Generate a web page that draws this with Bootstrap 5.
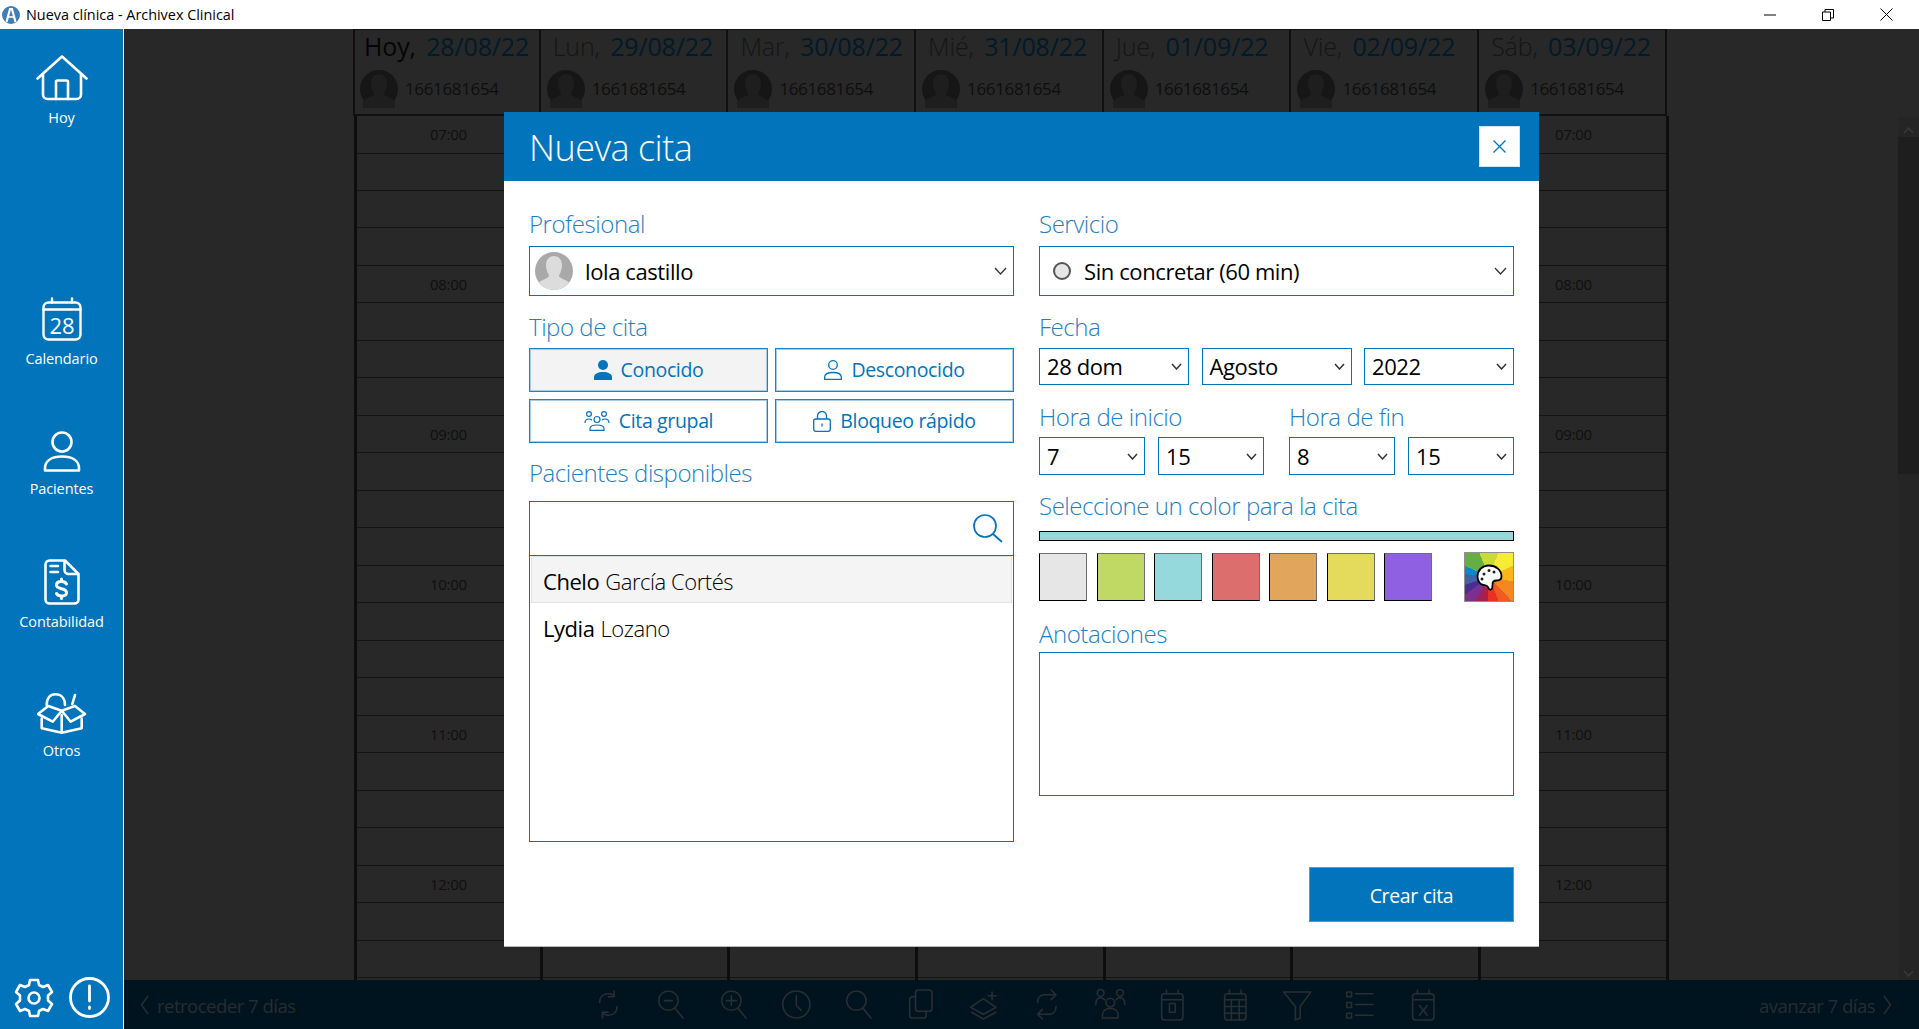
<!DOCTYPE html>
<html lang="es">
<head>
    <meta charset="UTF-8">
    <meta name="viewport" content="width=device-width, initial-scale=1.0">
    <title>Nueva clínica - Archivex Clinical</title>
    <link href="https://cdn.jsdelivr.net/npm/bootstrap@5.3.0/dist/css/bootstrap.min.css" rel="stylesheet">
    <style>
        html, body {
            height: 100%;
            overflow: hidden;
        }
        body {
            font-family: "Open Sans", "Noto Sans", sans-serif;
            background: #282828;
            color: #000;
        }
        .app-shell {
            height: 1029px;
            position: relative;
        }
        .title-bar {
            height: 29px;
            background: #fff;
            font-size: 14.4px;
            padding-left: 2px;
        }
        .title-bar .title-text {
            margin-left: 6px;
        }
        .win-btns {
            gap: 46px;
            padding-right: 26px;
        }
        .app-body {
            height: 1000px;
        }
        .side-bar {
            width: 124px;
            background: #0274bc;
            border-right: 1px solid #fff;
            color: #fff;
            font-size: 14.5px;
            letter-spacing: -.1px;
        }
        .side-item {
            text-align: center;
            line-height: 18px;
        }
        .side-item svg {
            display: block;
            margin: 0 auto 8px;
        }
        .side-hoy { padding-top: 26px; height: 268px; }
        .side-cal { height: 134px; }
        .side-cal svg { margin-bottom: 9px; }
        .side-pac { height: 128px; }
        .side-con { height: 134px; }
        .side-bottom {
            padding: 0 13px 11px 14px;
            gap: 15px;
        }
        .main-zone {
            min-width: 0;
        }
        .cal-zone {
            height: 951px;
            padding-left: 229px;
            position: relative;
        }
        .cal-day {
            width: 187.7px;
            flex: none;
        }
        .cal-head {
            height: 87px;
            border-top: 1px solid #101010;
            border-right: 2px solid #101010;
            border-bottom: 2px solid #101010;
            color: #151515;
        }
        .cal-day:first-child .cal-head {
            border-left: 2px solid #101010;
            color: #050505;
        }
        .cal-date {
            font-size: 25px;
            font-weight: 300;
            line-height: 36px;
            white-space: nowrap;
            letter-spacing: -.15px;
            margin-top: -2px;
            padding-left: 12px;
        }
        .cal-date b {
            color: #011a2a;
            font-weight: 500;
            margin-left: 4px;
        }
        .cal-day:first-child .cal-date {
            font-weight: 400;
            padding-left: 9px;
        }
        .cal-day:first-child .cal-date b {
            font-weight: 400;
        }
        .cal-user {
            font-size: 17px;
            color: #0e0e0e;
            gap: 7px;
            letter-spacing: -.35px;
            margin-top: 6px;
            padding-left: 6px;
        }
        .cal-day:first-child .cal-user {
            padding-left: 5px;
        }
        .cal-grid {
            height: 864px;
            margin-left: 2px;
            margin-right: -2px;
            border-right: 3px solid #0d0d0d;
            background-image: repeating-linear-gradient(to bottom, transparent 0, transparent 36.5px, #141414 36.5px, #141414 37.5px);
            color: #0f0f0f;
            font-size: 15px;
            letter-spacing: -.3px;
        }
        .cal-day:first-child .cal-grid {
            margin-left: 1px;
            border-left: 3px solid #0d0d0d;
        }
        .hour-cell {
            height: 150px;
            padding-top: 7px;
            text-align: center;
            line-height: 22px;
        }
        .scroll-col {
            position: absolute;
            right: 0;
            top: 88px;
            bottom: 0;
            width: 21px;
            background: #252525;
        }
        .scroll-col .thumb {
            height: 337px;
            background: #1e1e1e;
        }
        .scroll-col .arrow {
            height: 20px;
            text-align: center;
        }
        .tool-bar {
            height: 49px;
            background: #001420;
            color: #282c2e;
            font-size: 18.5px;
            padding: 0 27px 0 16px;
        }
        .tool-side {
            width: 260px;
            gap: 8px;
            white-space: nowrap;
            letter-spacing: -.5px;
        }
        .tool-side span {
            padding-top: 3px;
        }
        .tool-icons svg {
            display: block;
            width: 62.6px;
            height: 32px;
        }
        .modal-box {
            position: absolute;
            left: 504px;
            top: 112px;
            width: 1035px;
            height: 835px;
            background: #fff;
            border-bottom: 1px solid #b9b9b9;
        }
        .modal-top {
            height: 69px;
            background: #0274bc;
            color: #fff;
            padding: 0 19px 0 25px;
        }
        .modal-top h1 {
            font-size: 36px;
            font-weight: 300;
            margin: 0;
            padding-top: 2px;
            letter-spacing: -.5px;
        }
        .close-btn {
            width: 41px;
            height: 41px;
            background: #fff;
            border: 1px solid #cfe3f1;
            border-radius: 0;
            padding: 0;
        }
        .modal-cols {
            padding: 0 25px 24px;
            gap: 25px;
            height: 765px;
        }
        .col-left {
            width: 485px;
            flex: none;
        }
        .col-right {
            width: 475px;
            flex: none;
        }
        .field-label {
            display: block;
            color: #1d7fc4;
            font-size: 24px;
            font-weight: 300;
            line-height: 32px;
            letter-spacing: -.45px;
            margin: 0;
        }
        .sp-27 { margin-top: 27px; }
        .sp-16 { margin-top: 16px; }
        .sp-15 { margin-top: 15px; }
        .sp-14 { margin-top: 14px; }
        .sp-12 { margin-top: 12px; }
        .sp-9 { margin-top: 9px; }
        .sp-7 { margin-top: 7px; }
        .sp-6 { margin-top: 6px; }
        .sp-5 { margin-top: 5px; }
        .sp-4 { margin-top: 4px; }
        .sp-2 { margin-top: 2px; }
        .box-field {
            border: 1px solid #0274bc;
            background: #fff;
            color: #000;
            font-size: 22px;
            letter-spacing: -.4px;
        }
        .big-select {
            height: 50px;
            padding: 0 6px 0 5px;
        }
        .small-select {
            height: 37px;
            padding: 0 6px 0 7px;
            flex: 1 1 0;
            min-width: 0;
        }
        .hour-sel {
            height: 38px;
        }
        .type-btn {
            flex: 1 1 0;
            height: 44px;
            border: 1px solid #1f82c4;
            box-shadow: inset 0 0 0 1px #a5cde9;
            border-radius: 0;
            background: #fff;
            color: #0274bc;
            font-size: 19.5px;
            letter-spacing: -.35px;
            gap: 9px;
            padding: 0;
        }
        .type-btn.is-on {
            background: #f3f3f3;
        }
        .patient-box {
            border: 1px solid #0274bc;
            height: 341px;
        }
        .search-row {
            height: 54px;
            border-bottom: 1px solid #0274bc;
            padding-right: 10px;
        }
        .patient-item {
            height: 47px;
            padding: 3px 0 0 11px;
            font-size: 22px;
            font-weight: 300;
            letter-spacing: -.45px;
            margin: 0 1px;
            border: 1px solid transparent;
        }
        .patient-item b {
            font-weight: 400;
            margin-right: 6px;
        }
        .patient-item.is-on {
            background: #f4f4f4;
            border-color: #e2e2e2;
        }
        .radio-dot {
            width: 18px;
            height: 18px;
            background: #e6e6e6;
            border: 2px solid #555;
            margin-left: 8px;
            margin-right: 13px;
        }
        .color-bar {
            height: 10px;
            background: #96d9dc;
            border: 1px solid #000;
        }
        .swatch-row {
            gap: 9.5px;
        }
        .swatch {
            width: 48px;
            height: 48px;
            border: 1px solid #000;
            border-top: 1px solid #6e6e6e;
            border-right: 1px solid #6e6e6e;
            flex: none;
        }
        .swatch-1 { background: #e6e6e6; }
        .swatch-2 { background: #bfd964; }
        .swatch-3 { background: #96d9dc; }
        .swatch-4 { background: #dc6e6e; }
        .swatch-5 { background: #e2a55c; }
        .swatch-6 { background: #e4da5c; }
        .swatch-7 { background: #8f60e2; }
        .palette-btn {
            width: 50px;
            height: 50px;
            margin-left: auto;
            margin-top: -1px;
            border: 1px solid #8f8f8f;
            background: conic-gradient(from -22deg, #c8db36 0 12%, #f6ec36 12% 24%, #f8b61a 24% 34%, #f4871f 34% 44%, #f15a22 44% 50%, #e92f26 50% 57%, #a71f4f 57% 64%, #7b2f90 64% 71%, #4b2d91 71% 76%, #4262a8 76% 83%, #0e88cc 83% 88%, #66ae44 88% 100%);
        }
        .notes-box {
            height: 144px;
        }
        .create-btn {
            width: 205px;
            height: 55px;
            background: #0274bc;
            color: #fff;
            border: 1px solid #4a9fd8;
            border-radius: 0;
            font-size: 19.5px;
            letter-spacing: -.35px;
            padding: 2px 0 0;
        }
        .gap-row { gap: 7px; }
        .gap-date { gap: 12.5px; }
        .gap-hour { gap: 13px; }
        .hour-group { width: 225px; flex: none; }
    </style>
</head>
<body>
<div class="app-shell">
    <div class="title-bar d-flex align-items-center">
        <svg width="18" height="18" viewBox="0 0 18 18"><circle cx="9" cy="9" r="9" fill="#3f7cb8"/><path d="M4.5 16 8 3h2l3.5 13" fill="none" stroke="#fff" stroke-width="2.2"/><path d="M6 11h6" stroke="#fff" stroke-width="1.6"/></svg>
        <span class="title-text">Nueva clínica - Archivex Clinical</span>
        <div class="win-btns d-flex align-items-center ms-auto">
            <svg width="12" height="12" viewBox="0 0 12 12"><path d="M0 6h12" stroke="#000" fill="none"/></svg>
            <svg width="12" height="12" viewBox="0 0 12 12"><path d="M.5 3h8v8.5h-8zM3 3V.5h8.5V9H8.5" stroke="#000" fill="none"/></svg>
            <svg width="13" height="13" viewBox="0 0 13 13"><path d="M.5.5l12 12M12.5.5l-12 12" stroke="#000" fill="none"/></svg>
        </div>
    </div>

    <div class="app-body d-flex">
        <div class="side-bar d-flex flex-column flex-shrink-0">
            <div class="side-item side-hoy">
                <svg width="52" height="46" viewBox="0 0 52 46" fill="none" stroke="#fff" stroke-width="2.6" stroke-linejoin="round" stroke-linecap="round"><path d="M1.5 23.5 26 1.5l24.5 22"/><path d="M7 19v20.5a4.500 4.500 0 0 0 4.500 4.500h29a4.500 4.500 0 0 0 4.500-4.500V19"/><path d="M20 44V27a1.500 1.500 0 0 1 1.500-1.500h9A1.500 1.500 0 0 1 32 27v17"/></svg>
                Hoy
            </div>
            <div class="side-item side-cal">
                <svg width="40" height="44" viewBox="0 0 40 44" fill="none" stroke="#fff" stroke-width="2.4" stroke-linecap="round"><rect x="1.5" y="5.5" width="37" height="37" rx="5"/><path d="M1.5 12.5h37M10 1.5v4M30 1.5v4"/><text x="20" y="37" text-anchor="middle" fill="#fff" stroke="none" font-size="22" font-family="Open Sans">28</text></svg>
                Calendario
            </div>
            <div class="side-item side-pac">
                <svg width="38" height="41" viewBox="0 0 38 41" fill="none" stroke="#fff" stroke-width="2.6"><circle cx="19" cy="11" r="9.5"/><path d="M2 39.5v-2c0-8 7-12 17-12s17 4 17 12v2z" stroke-linejoin="round"/></svg>
                Pacientes
            </div>
            <div class="side-item side-con">
                <svg width="36" height="46" viewBox="0 0 36 46" fill="none" stroke="#fff" stroke-width="2.6" stroke-linejoin="round" stroke-linecap="round"><path d="M21 1.500H5.500a4 4 0 0 0-4 4v35a4 4 0 0 0 4 4h25a4 4 0 0 0 4-4V15z"/><path d="M20.500 2v9a4 4 0 0 0 4 4h9.500M6.500 7h7.500M6.500 13h7.500"/><path d="M22.500 25c-1-2-2.500-2.500-5-2.500-3 0-5 1.200-5 3.500s2 3 5 3.700 5 1.500 5 3.800-2 3.500-5 3.500c-2.500 0-4-.7-5-2.500M17.500 20v2.500M17.500 37v2.500" stroke-width="3"/></svg>
                Contabilidad
            </div>
            <div class="side-item">
                <svg width="50" height="41" viewBox="0 0 50 41" fill="none" stroke="#fff" stroke-width="2.6" stroke-linejoin="round" stroke-linecap="round"><path d="M9.700 12C9.700 5 13 1.300 18.500 1.300S28 5 28 12M38 2l-2.700 9"/><path d="M24.700 17.700 11.300 13 1 21l14.700 7.700zM24.700 17.700 38 13l10 8-14.300 7.700z"/><path d="M4.700 25.500v9.800l20 4.400 20-4.400v-9.800M24.700 22v17"/></svg>
                Otros
            </div>
            <div class="side-bottom d-flex align-items-center mt-auto">
                <svg width="40" height="40" viewBox="0 0 40 40" fill="none" stroke="#fff" stroke-width="2.6" stroke-linejoin="round"><path d="M16 2h8l1 5 4 2 5-2 4 7-4 3.500v5l4 3.500-4 7-5-2-4 2-1 5h-8l-1-5-4-2-5 2-4-7 4-3.500v-5L2 14l4-7 5 2 4-2z"/><circle cx="20" cy="20" r="5.5"/></svg>
                <svg width="41" height="41" viewBox="0 0 41 41" fill="none" stroke="#fff" stroke-width="2.8" stroke-linecap="round"><circle cx="20.5" cy="20.5" r="19"/><path d="M20.5 9v15M20.5 30v1.500"/></svg>
            </div>
        </div>

        <div class="main-zone flex-grow-1 d-flex flex-column">
            <div class="cal-zone d-flex" id="calendario"></div>
            <div class="tool-bar d-flex align-items-center">
                <div class="tool-side d-flex align-items-center">
                    <svg width="9" height="20" viewBox="0 0 9 20" fill="none" stroke="#282c2e" stroke-width="1.5"><path d="M8 1 1.500 10 8 19"/></svg>
                    <span>retroceder 7 días</span>
                </div>
                <div class="tool-icons d-flex flex-grow-1 justify-content-center" id="herramientas"></div>
                <div class="tool-side d-flex align-items-center justify-content-end">
                    <span>avanzar 7 días</span>
                    <svg width="9" height="20" viewBox="0 0 9 20" fill="none" stroke="#282c2e" stroke-width="1.5"><path d="M1 1l6.500 9L1 19"/></svg>
                </div>
            </div>
        </div>
    </div>

    <div class="modal-box">
        <div class="modal-top d-flex align-items-center justify-content-between">
            <h1>Nueva cita</h1>
            <button class="close-btn d-flex align-items-center justify-content-center" type="button" aria-label="Cerrar">
                <svg width="13" height="13" viewBox="0 0 13 13"><path d="M.5.5l12 12M12.5.5l-12 12" stroke="#0274bc" stroke-width="1.3" fill="none"/></svg>
            </button>
        </div>
        <div class="modal-cols d-flex">
            <div class="col-left d-flex flex-column">
                <label class="field-label sp-27">Profesional</label>
                <div class="box-field big-select sp-6 d-flex align-items-center">
                    <svg width="38" height="38" viewBox="0 0 38 38"><defs><clipPath id="av1"><circle cx="19" cy="19" r="19"/></clipPath></defs><circle cx="19" cy="19" r="19" fill="#a9a9a9"/><g clip-path="url(#av1)" fill="#dcdcdc"><path d="M11 13c0-6 4-9 8-9s8 3 8 9-3 10-3 11c0 2 8 4 11 7v8H3v-8c3-3 11-5 11-7s-3-5-3-11z"/></g></svg>
                    <span class="ms-2 ps-1">lola castillo</span>
                    <svg class="ms-auto" width="13" height="8" viewBox="0 0 13 8" fill="none" stroke="#333" stroke-width="1.3"><path d="M1 1l5.500 6L12 1"/></svg>
                </div>
                <label class="field-label sp-15">Tipo de cita</label>
                <div class="d-flex gap-row sp-5">
                    <button class="type-btn is-on btn d-flex align-items-center justify-content-center" type="button">
                        <svg width="18" height="20" viewBox="0 0 18 20" fill="#0274bc"><circle cx="9" cy="5" r="5"/><path d="M0 20v-3c0-3 4-5 9-5s9 2 9 5v3z"/></svg>
                        Conocido
                    </button>
                    <button class="type-btn btn d-flex align-items-center justify-content-center" type="button">
                        <svg width="18" height="20" viewBox="0 0 18 20" fill="none" stroke="#0274bc" stroke-width="1.3"><circle cx="9" cy="5" r="4.3"/><path d="M.7 19.300v-2.300c0-3 3.500-4.500 8.300-4.500s8.300 1.500 8.300 4.500v2.300z"/></svg>
                        Desconocido
                    </button>
                </div>
                <div class="d-flex gap-row sp-7">
                    <button class="type-btn btn d-flex align-items-center justify-content-center" type="button">
                        <svg width="26" height="20" viewBox="0 0 26 20" fill="none" stroke="#0274bc" stroke-width="1.2"><circle cx="13" cy="8.5" r="3"/><circle cx="5" cy="3" r="2.4"/><circle cx="20" cy="3" r="2.4"/><path d="M6 19.300v-1.800c0-2 3-3.500 7-3.500s7 1.500 7 3.500v1.800zM1 12c0-3 2-4 4-4 1 0 2 .3 3 1M25 12c0-3-2-4-4-4-1 0-2 .3-3 1"/></svg>
                        Cita grupal
                    </button>
                    <button class="type-btn btn d-flex align-items-center justify-content-center" type="button">
                        <svg width="18" height="21" viewBox="0 0 18 21" fill="none" stroke="#0274bc" stroke-width="1.3"><rect x=".7" y="8" width="16.6" height="12.3" rx="2"/><path d="M4.500 8V5a4.500 4.500 0 0 1 9 0v3M9 12.500v3"/></svg>
                        Bloqueo rápido
                    </button>
                </div>
                <label class="field-label sp-14">Pacientes disponibles</label>
                <div class="patient-box sp-12">
                    <div class="search-row d-flex align-items-center justify-content-end">
                        <svg width="30" height="29" viewBox="0 0 30 29" fill="none" stroke="#0274bc" stroke-width="1.7"><circle cx="12" cy="12" r="11"/><path d="M20 20l9 8"/></svg>
                    </div>
                    <div class="patient-item is-on d-flex align-items-center"><b>Chelo</b> García Cortés</div>
                    <div class="patient-item d-flex align-items-center"><b>Lydia</b> Lozano</div>
                </div>
            </div>

            <div class="col-right d-flex flex-column">
                <label class="field-label sp-27">Servicio</label>
                <div class="box-field big-select sp-6 d-flex align-items-center">
                    <span class="d-inline-block rounded-circle radio-dot"></span>
                    <span>Sin concretar (60 min)</span>
                    <svg class="ms-auto" width="13" height="8" viewBox="0 0 13 8" fill="none" stroke="#333" stroke-width="1.3"><path d="M1 1l5.500 6L12 1"/></svg>
                </div>
                <label class="field-label sp-15">Fecha</label>
                <div class="d-flex gap-date sp-5">
                    <div class="box-field small-select d-flex align-items-center justify-content-between">28 dom <svg width="11" height="7" viewBox="0 0 11 7" fill="none" stroke="#333" stroke-width="1.5"><path d="M1 1l4.500 5L10 1"/></svg></div>
                    <div class="box-field small-select d-flex align-items-center justify-content-between">Agosto <svg width="11" height="7" viewBox="0 0 11 7" fill="none" stroke="#333" stroke-width="1.5"><path d="M1 1l4.500 5L10 1"/></svg></div>
                    <div class="box-field small-select d-flex align-items-center justify-content-between">2022 <svg width="11" height="7" viewBox="0 0 11 7" fill="none" stroke="#333" stroke-width="1.5"><path d="M1 1l4.500 5L10 1"/></svg></div>
                </div>
                <div class="d-flex justify-content-between sp-16">
                    <div class="hour-group">
                        <label class="field-label">Hora de inicio</label>
                        <div class="d-flex gap-hour sp-4">
                            <div class="box-field small-select hour-sel d-flex align-items-center justify-content-between">7 <svg width="11" height="7" viewBox="0 0 11 7" fill="none" stroke="#333" stroke-width="1.5"><path d="M1 1l4.500 5L10 1"/></svg></div>
                            <div class="box-field small-select hour-sel d-flex align-items-center justify-content-between">15 <svg width="11" height="7" viewBox="0 0 11 7" fill="none" stroke="#333" stroke-width="1.5"><path d="M1 1l4.500 5L10 1"/></svg></div>
                        </div>
                    </div>
                    <div class="hour-group">
                        <label class="field-label">Hora de fin</label>
                        <div class="d-flex gap-hour sp-4">
                            <div class="box-field small-select hour-sel d-flex align-items-center justify-content-between">8 <svg width="11" height="7" viewBox="0 0 11 7" fill="none" stroke="#333" stroke-width="1.5"><path d="M1 1l4.500 5L10 1"/></svg></div>
                            <div class="box-field small-select hour-sel d-flex align-items-center justify-content-between">15 <svg width="11" height="7" viewBox="0 0 11 7" fill="none" stroke="#333" stroke-width="1.5"><path d="M1 1l4.500 5L10 1"/></svg></div>
                        </div>
                    </div>
                </div>
                <label class="field-label sp-15">Seleccione un color para la cita</label>
                <div class="color-bar sp-9"></div>
                <div class="swatch-row d-flex sp-12">
                    <div class="swatch swatch-1"></div>
                    <div class="swatch swatch-2"></div>
                    <div class="swatch swatch-3"></div>
                    <div class="swatch swatch-4"></div>
                    <div class="swatch swatch-5"></div>
                    <div class="swatch swatch-6"></div>
                    <div class="swatch swatch-7"></div>
                    <div class="palette-btn d-flex align-items-center justify-content-center">
                        <svg width="27" height="27" viewBox="0 0 27 27"><path d="M13 1.500C6 1.500 1.500 6.500 1.500 12.500c0 5 3 8 6 8.500 2.500.5 4 .5 4.500 2 .5 2 1.500 3 3 2.500 1.500-.5 1.500-3 1.500-5 0-2.500 1.500-4 4-4 2.500 0 5-.5 5-4C25.500 6 20 1.500 13 1.500z" fill="#fff" stroke="#000" stroke-width="1.8"/><circle cx="8" cy="10" r="1.5" fill="#222"/><circle cx="13" cy="6.5" r="1.5" fill="#222"/><circle cx="18" cy="8" r="1.5" fill="#222"/><circle cx="6" cy="15" r="1.5" fill="#222"/></svg>
                    </div>
                </div>
                <label class="field-label sp-16">Anotaciones</label>
                <div class="box-field notes-box sp-2"></div>
                <div class="d-flex justify-content-end mt-auto">
                    <button class="create-btn btn" type="button">Crear cita</button>
                </div>
            </div>
        </div>
    </div>
</div>

<script>
    const dias = [
        ['Hoy', '28/08/22'], ['Lun', '29/08/22'], ['Mar', '30/08/22'], ['Mié', '31/08/22'],
        ['Jue', '01/09/22'], ['Vie', '02/09/22'], ['Sáb', '03/09/22']
    ];
    const horas = ['07:00', '08:00', '09:00', '10:00', '11:00', '12:00'];
    const avatar = `<svg width="38" height="38" viewBox="0 0 38 38" class="flex-shrink-0"><circle cx="19" cy="19" r="19" fill="#161616"/><path d="M11 13c0-6 4-9 8-9s8 3 8 9-3 10-3 11c0 2 8 4 11 7v7H3v-7c3-3 11-5 11-7s-3-5-3-11z" fill="#1e1e1e"/></svg>`;

    let cols = '';
    dias.forEach((dia, i) => {
        let celdas = '';
        horas.forEach(h => {
            celdas += `<div class="hour-cell">${(i === 0 || i === 6) ? h : ''}</div>`;
        });
        cols += `<div class="cal-day">
            <div class="cal-head">
                <div class="cal-date">${dia[0]}, <b>${dia[1]}</b></div>
                <div class="cal-user d-flex align-items-center">${avatar}<span>1661681654</span></div>
            </div>
            <div class="cal-grid">${celdas}</div>
        </div>`;
    });
    cols += `<div class="scroll-col d-flex flex-column">
        <div class="arrow"><svg width="11" height="7" viewBox="0 0 11 7" fill="none" stroke="#3a3a3a" stroke-width="1.5"><path d="M1 6l4.500-5L10 6"/></svg></div>
        <div class="thumb"></div>
        <div class="arrow mt-auto"><svg width="11" height="7" viewBox="0 0 11 7" fill="none" stroke="#3a3a3a" stroke-width="1.5"><path d="M1 1l4.500 5L10 1"/></svg></div>
    </div>`;
    document.getElementById('calendario').innerHTML = cols;

    const c = 'fill="none" stroke="#2b2e30" stroke-width="1.6" stroke-linecap="round" stroke-linejoin="round"';
    const iconos = [
        '<path d="M6 14c0-6 4-9 9-9 3 0 5 1 6 3M21 2v6h-6M24 18c0 6-4 9-9 9-3 0-5-1-6-3M9 30v-6h6"/>',
        '<circle cx="13" cy="12" r="10"/><path d="M20 20l8 10M9 12h8"/>',
        '<circle cx="13" cy="12" r="10"/><path d="M20 20l8 10M8 12h10M13 7v10"/>',
        '<circle cx="15" cy="16" r="14"/><path d="M15 7v10l5 5"/>',
        '<circle cx="13" cy="12" r="10"/><path d="M20 20l8 10"/>',
        '<rect x="9" y="1" width="17" height="22" rx="3"/><path d="M9 8H6a3 3 0 0 0-3 3v16a3 3 0 0 0 3 3h11a3 3 0 0 0 3-3v-4"/>',
        '<path d="M15 10l13 9-13 7-13-7zM3 24l12 7 13-7M24 3v8M20 7h8"/>',
        '<path d="M6 14c0-5 3-8 7-8h12M20 1l5 5-5 5M25 18c0 5-3 8-7 8H6M11 31l-5-5 5-5"/>',
        '<circle cx="16" cy="14" r="4.500"/><circle cx="6" cy="4" r="3.500"/><circle cx="26" cy="4" r="3.500"/><path d="M8 30v-4c0-4 4-6 8-6s8 2 8 6v4zM1 16c0-5 2-7 5-7 2 0 3 1 4 2M31 16c0-5-2-7-5-7-2 0-3 1-4 2"/>',
        '<rect x="5" y="5" width="22" height="27" rx="3"/><path d="M10 1v4M22 1v4M5 11h22M13 15h6v9h-6z"/>',
        '<rect x="5" y="5" width="22" height="27" rx="3"/><path d="M10 1v4M22 1v4M5 11h22M5 18h22M5 25h22M12 11v21M20 11v21"/>',
        '<path d="M2 3h28L19 18v12l-5 2V18z"/>',
        '<rect x="2" y="3" width="5" height="5"/><rect x="2" y="14" width="5" height="5"/><rect x="2" y="25" width="5" height="5"/><path d="M11 5h18M11 16h18M11 27h18"/>',
        '<rect x="5" y="5" width="22" height="27" rx="3"/><path d="M10 1v4M22 1v4M5 11h22M12 17l8 10M20 17l-8 10"/>'
    ];
    document.getElementById('herramientas').innerHTML = iconos
        .map(i => `<svg viewBox="0 0 32 33" ${c}>${i}</svg>`).join('');
</script>
</body>
</html>
